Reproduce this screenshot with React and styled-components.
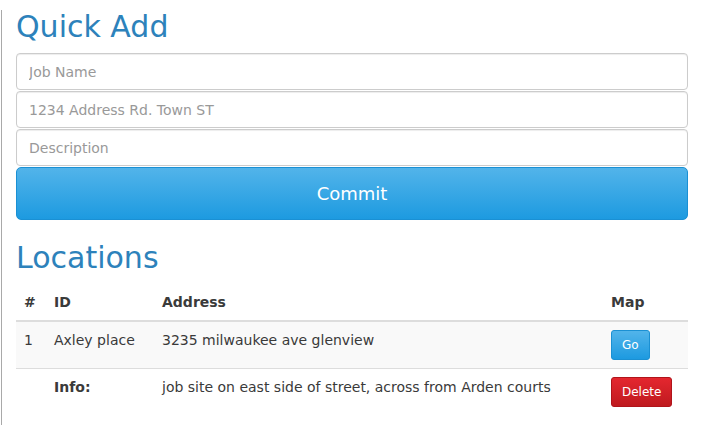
import React from 'react';
import styled, { createGlobalStyle } from 'styled-components';

const GlobalStyle = createGlobalStyle`
  html, body {
    margin: 0;
    padding: 0;
    background: #fff;
  }
  body {
    font-family: "DejaVu Sans", Verdana, sans-serif;
    font-size: 14px;
    line-height: 20px;
    color: #333;
  }
  * {
    box-sizing: border-box;
  }
`;

// Layout.
const Page = styled.div`
  min-height: 425px;
  margin-left: 1px;
  border-left: 1px solid #a9a9a9;
  padding: 0 15px 0 14px;
`;

const Heading = styled.h2`
  margin: ${({ first }) => (first ? '10px 0 10px' : '21px 0 10px')};
  font-size: 30px;
  font-weight: 400;
  line-height: 33px;
  color: #2d82bb;
`;

// Quick add form.
const Form = styled.form`
  display: flex;
  flex-direction: column;
  gap: 1px;
`;

const Field = styled.input`
  display: block;
  width: 100%;
  height: 37px;
  padding: 6px 12px;
  font-family: inherit;
  font-size: 14px;
  color: #555;
  background: #fff;
  border: 1px solid #ccc;
  border-radius: 4px;
  box-shadow: inset 0 1px 1px rgba(0, 0, 0, 0.075);
  outline: none;

  &::placeholder {
    color: #999;
  }
`;

const CommitButton = styled.button`
  display: block;
  width: 100%;
  height: 53px;
  margin: 0;
  font-family: inherit;
  font-size: 18px;
  color: #fff;
  background: linear-gradient(to bottom, #52b4ea 0%, #1d9ae0 100%);
  border: 1px solid #1a90d4;
  border-radius: 5px;
  cursor: pointer;
`;

// Locations table.
const Table = styled.table`
  width: 100%;
  border-collapse: collapse;
  border-spacing: 0;
  margin-top: 10px;
  color: #3a3a3a;
`;

const HeadCell = styled.th`
  padding: 8px;
  text-align: left;
  vertical-align: bottom;
  font-weight: 700;
  border-bottom: 2px solid #ddd;
  width: ${({ w }) => w || 'auto'};
`;

const Row = styled.tr`
  background: ${({ striped }) => (striped ? '#f9f9f9' : 'transparent')};
  border-bottom: ${({ last }) => (last ? 'none' : '1px solid #ddd')};
`;

const Cell = styled.td`
  padding: 8px;
  vertical-align: top;
  font-weight: ${({ bold }) => (bold ? 700 : 400)};
`;

const SmallButton = styled.button`
  display: inline-block;
  height: 30px;
  padding: 5px 10px;
  font-family: inherit;
  font-size: 12px;
  line-height: 18px;
  color: #fff;
  border-radius: 3px;
  cursor: pointer;
  border: 1px solid ${({ danger }) => (danger ? '#b0141b' : '#1b90d3')};
  background: ${({ danger }) => (danger
    ? 'linear-gradient(to bottom, #e4272f 0%, #bf1a1f 100%)'
    : 'linear-gradient(to bottom, #52b4ea 0%, #1d9ae0 100%)')};
`;

const locations = [
  {
    id: 1,
    name: 'Axley place',
    address: '3235 milwaukee ave glenview',
    info: 'job site on east side of street, across from Arden courts',
  },
];

const App = () => (
  <>
    <GlobalStyle />
    <Page>
      <Heading first>Quick Add</Heading>
      <Form onSubmit={(e) => e.preventDefault()}>
        <Field placeholder="Job Name" />
        <Field placeholder="1234 Address Rd. Town ST" />
        <Field placeholder="Description" />
        <CommitButton type="submit">Commit</CommitButton>
      </Form>

      <Heading>Locations</Heading>
      <Table>
        <thead>
          <tr>
            <HeadCell w="30px">#</HeadCell>
            <HeadCell w="108px">ID</HeadCell>
            <HeadCell>Address</HeadCell>
            <HeadCell w="85px">Map</HeadCell>
          </tr>
        </thead>
        <tbody>
          {locations.map((loc) => (
            <React.Fragment key={loc.id}>
              <Row striped>
                <Cell>{loc.id}</Cell>
                <Cell>{loc.name}</Cell>
                <Cell>{loc.address}</Cell>
                <Cell><SmallButton>Go</SmallButton></Cell>
              </Row>
              <Row last>
                <Cell />
                <Cell bold>Info:</Cell>
                <Cell>{loc.info}</Cell>
                <Cell><SmallButton danger>Delete</SmallButton></Cell>
              </Row>
            </React.Fragment>
          ))}
        </tbody>
      </Table>
    </Page>
  </>
);

export default App;
